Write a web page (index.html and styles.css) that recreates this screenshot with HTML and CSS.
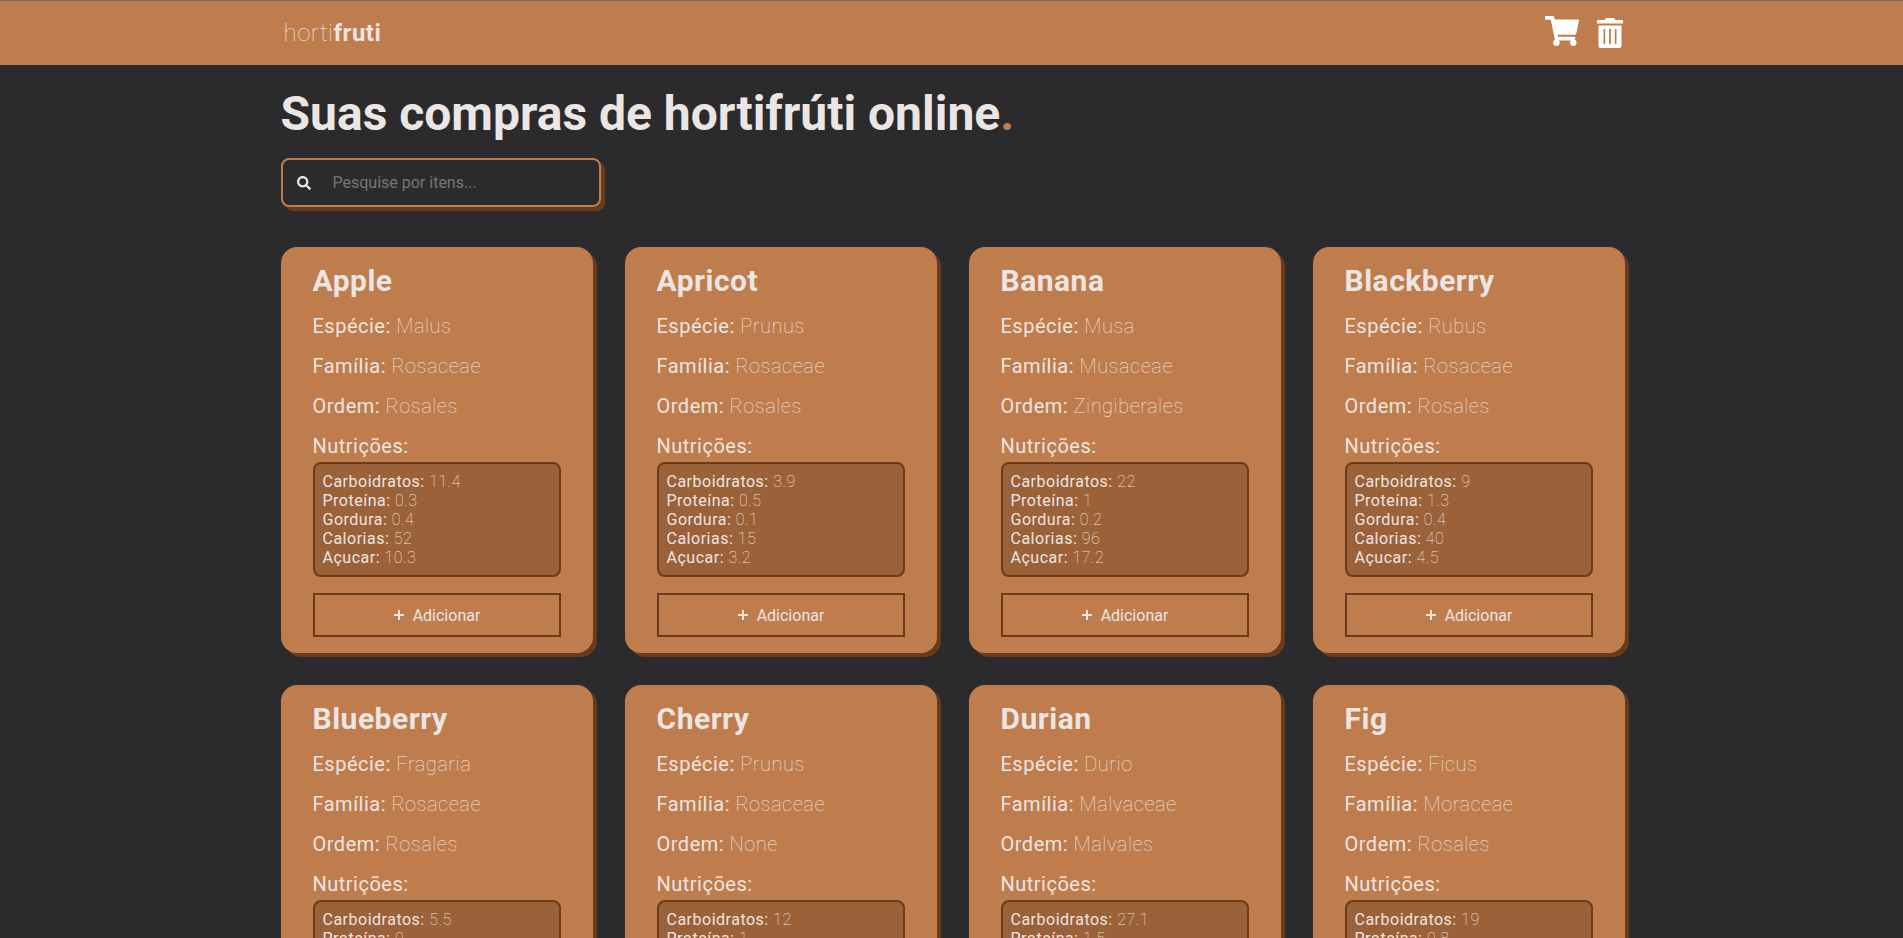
FILE: index.html
```html
<!DOCTYPE html>
<html lang="pt-BR">
<head>
<meta charset="utf-8">
<title>hortifruti</title>
<link rel="stylesheet" href="styles.css">
</head>
<body>
<header class="topbar">
  <div class="container topbar-inner">
    <a class="logo" href="#">horti<strong>fruti</strong></a>
    <nav class="actions">
      <button class="icon-btn" type="button" aria-label="Carrinho">
        <svg class="cart" viewBox="0 0 34 30" fill="#fff"><path d="M1 0H8Q9 0 9.200 1L9.700 3.500H33Q34.200 3.500 34 4.800L31.300 17.500Q31 18.700 30 18.700H12.600L13 20.800H29.500Q30.500 20.800 30.300 22L29.700 24.600H10L5.800 3.700H1Q0 3.700 0 2.700V1Q0 0 1 0Z"/><circle cx="11.400" cy="26.700" r="3.200"/><circle cx="28.300" cy="26.700" r="3.200"/></svg>
      </button>
      <button class="icon-btn" type="button" aria-label="Esvaziar">
        <svg class="trash" viewBox="0 0 26 30"><path fill="#fff" fill-rule="evenodd" d="M0 2.500Q0 2 .5 2H7.500L8.500 .6Q9 0 9.700 0H16.300Q17 0 17.500 .6L18.500 2H25.500Q26 2 26 2.500V5.500H0ZM1.500 7.500H24.500V27.500Q24.500 30 22 30H4Q1.500 30 1.500 27.500ZM6.500 11V26H8.200V11ZM12.100 11V26H13.900V11ZM17.800 11V26H19.500V11Z"/></svg>
      </button>
    </nav>
  </div>
</header>
<main class="container">
  <h1 class="title">Suas compras de hortifrúti online<span class="dot">.</span></h1>
  <label class="search">
    <svg class="search-icon" viewBox="0 0 512 512" aria-hidden="true"><path fill="currentColor" d="M505 442.700L405.300 343c-4.500-4.500-10.600-7-17-7H372c27.600-35.300 44-79.700 44-128C416 93.100 322.900 0 208 0S0 93.100 0 208s93.100 208 208 208c48.300 0 92.700-16.400 128-44v16.300c0 6.400 2.500 12.500 7 17l99.700 99.700c9.400 9.400 24.600 9.400 33.900 0l28.300-28.300c9.400-9.400 9.400-24.600.1-34zM208 336c-70.700 0-128-57.200-128-128 0-70.700 57.200-128 128-128 70.700 0 128 57.200 128 128 0 70.700-57.200 128-128 128z"/></svg>
    <input class="search-input" type="text" placeholder="Pesquise por itens..." aria-label="Pesquise por itens">
  </label>
  <section class="grid">
    <article class="card"><h2 class="name">Apple</h2><p class="row">Espécie: <span>Malus</span></p><p class="row">Família: <span>Rosaceae</span></p><p class="row">Ordem: <span>Rosales</span></p><p class="row">Nutrições:</p>
      <ul class="facts"><li>Carboidratos: <span>11.4</span></li><li>Proteína: <span>0.3</span></li><li>Gordura: <span>0.4</span></li><li>Calorias: <span>52</span></li><li>Açucar: <span>10.3</span></li></ul>
      <button class="add" type="button"><svg class="plus" viewBox="0 0 12 12"><path d="M6 1V11M1 6H11"/></svg>Adicionar</button></article>
    <article class="card"><h2 class="name">Apricot</h2><p class="row">Espécie: <span>Prunus</span></p><p class="row">Família: <span>Rosaceae</span></p><p class="row">Ordem: <span>Rosales</span></p><p class="row">Nutrições:</p>
      <ul class="facts"><li>Carboidratos: <span>3.9</span></li><li>Proteína: <span>0.5</span></li><li>Gordura: <span>0.1</span></li><li>Calorias: <span>15</span></li><li>Açucar: <span>3.2</span></li></ul>
      <button class="add" type="button"><svg class="plus" viewBox="0 0 12 12"><path d="M6 1V11M1 6H11"/></svg>Adicionar</button></article>
    <article class="card"><h2 class="name">Banana</h2><p class="row">Espécie: <span>Musa</span></p><p class="row">Família: <span>Musaceae</span></p><p class="row">Ordem: <span>Zingiberales</span></p><p class="row">Nutrições:</p>
      <ul class="facts"><li>Carboidratos: <span>22</span></li><li>Proteína: <span>1</span></li><li>Gordura: <span>0.2</span></li><li>Calorias: <span>96</span></li><li>Açucar: <span>17.2</span></li></ul>
      <button class="add" type="button"><svg class="plus" viewBox="0 0 12 12"><path d="M6 1V11M1 6H11"/></svg>Adicionar</button></article>
    <article class="card"><h2 class="name">Blackberry</h2><p class="row">Espécie: <span>Rubus</span></p><p class="row">Família: <span>Rosaceae</span></p><p class="row">Ordem: <span>Rosales</span></p><p class="row">Nutrições:</p>
      <ul class="facts"><li>Carboidratos: <span>9</span></li><li>Proteína: <span>1.3</span></li><li>Gordura: <span>0.4</span></li><li>Calorias: <span>40</span></li><li>Açucar: <span>4.5</span></li></ul>
      <button class="add" type="button"><svg class="plus" viewBox="0 0 12 12"><path d="M6 1V11M1 6H11"/></svg>Adicionar</button></article>
    <article class="card"><h2 class="name">Blueberry</h2><p class="row">Espécie: <span>Fragaria</span></p><p class="row">Família: <span>Rosaceae</span></p><p class="row">Ordem: <span>Rosales</span></p><p class="row">Nutrições:</p>
      <ul class="facts"><li>Carboidratos: <span>5.5</span></li><li>Proteína: <span>0</span></li><li>Gordura: <span>0.4</span></li><li>Calorias: <span>29</span></li><li>Açucar: <span>5.4</span></li></ul>
      <button class="add" type="button"><svg class="plus" viewBox="0 0 12 12"><path d="M6 1V11M1 6H11"/></svg>Adicionar</button></article>
    <article class="card"><h2 class="name">Cherry</h2><p class="row">Espécie: <span>Prunus</span></p><p class="row">Família: <span>Rosaceae</span></p><p class="row">Ordem: <span>None</span></p><p class="row">Nutrições:</p>
      <ul class="facts"><li>Carboidratos: <span>12</span></li><li>Proteína: <span>1</span></li><li>Gordura: <span>0.3</span></li><li>Calorias: <span>50</span></li><li>Açucar: <span>8</span></li></ul>
      <button class="add" type="button"><svg class="plus" viewBox="0 0 12 12"><path d="M6 1V11M1 6H11"/></svg>Adicionar</button></article>
    <article class="card"><h2 class="name">Durian</h2><p class="row">Espécie: <span>Durio</span></p><p class="row">Família: <span>Malvaceae</span></p><p class="row">Ordem: <span>Malvales</span></p><p class="row">Nutrições:</p>
      <ul class="facts"><li>Carboidratos: <span>27.1</span></li><li>Proteína: <span>1.5</span></li><li>Gordura: <span>5.3</span></li><li>Calorias: <span>147</span></li><li>Açucar: <span>6.75</span></li></ul>
      <button class="add" type="button"><svg class="plus" viewBox="0 0 12 12"><path d="M6 1V11M1 6H11"/></svg>Adicionar</button></article>
    <article class="card"><h2 class="name">Fig</h2><p class="row">Espécie: <span>Ficus</span></p><p class="row">Família: <span>Moraceae</span></p><p class="row">Ordem: <span>Rosales</span></p><p class="row">Nutrições:</p>
      <ul class="facts"><li>Carboidratos: <span>19</span></li><li>Proteína: <span>0.8</span></li><li>Gordura: <span>0.3</span></li><li>Calorias: <span>74</span></li><li>Açucar: <span>16</span></li></ul>
      <button class="add" type="button"><svg class="plus" viewBox="0 0 12 12"><path d="M6 1V11M1 6H11"/></svg>Adicionar</button></article>
  </section>
</main>
</body>
</html>
```
FILE: styles.css
```css
:root {
  --bg: #2b2b2d;
  --brand: #bf7c4c;
  --brand-mid: #9b6139;
  --brand-dark: #693a1b;
  --text: #ebe5e3;
}
* { box-sizing: border-box; margin: 0; padding: 0; }
body {
  background: var(--bg);
  color: var(--text);
  font-family: Roboto, "Liberation Sans", sans-serif;
  font-size: 16px;
}
button, input { font: inherit; color: inherit; }
.container { max-width: 1346px; margin: 0 auto; padding-left: 2px; }
.topbar { background: var(--brand); border-top: 1px solid #716d7b; }
.topbar-inner {
  display: flex;
  align-items: center;
  justify-content: space-between;
  height: 64px;
}
.logo {
  padding-left: 3px;
  color: var(--text);
  font-size: 24px;
  font-weight: 100;
  text-decoration: none;
  letter-spacing: 0.5px;
}
.logo strong { font-weight: 700; }
.actions { display: flex; gap: 18px; padding-right: 2px; }
.icon-btn { display: flex; align-items: center; background: none; border: 0; cursor: pointer; }
.cart { width: 34px; height: 30px; margin-bottom: 4px; }
.trash { width: 26px; height: 30px; }
.title { padding-top: 20px; font-size: 48px; font-weight: 700; line-height: 57px; }
.dot { color: var(--brand); }
.search {
  display: flex;
  align-items: center;
  width: 320px;
  height: 49px;
  margin: 16px 0 40px;
  padding: 0 14px;
  border: 2px solid var(--brand);
  border-radius: 8px;
  box-shadow: 4px 4px 0 var(--brand-dark);
}
.search-icon { flex: none; width: 14px; height: 14px; }
.search-input { flex: 1; min-width: 0; margin-left: 22px; background: none; border: 0; outline: 0; }
.search-input::placeholder { color: #757575; }
.grid {
  display: grid;
  grid-template-columns: repeat(auto-fill, minmax(300px, 1fr));
  gap: 32px;
  padding-bottom: 32px;
}
.card {
  padding: 16px 32px;
  background: var(--brand);
  border-radius: 16px;
  box-shadow: 4px 4px 0 var(--brand-dark);
  letter-spacing: 0.5px;
}
.name { font-size: 30px; font-weight: 700; line-height: 35px; }
.row { margin-top: 16px; font-size: 20px; line-height: 24px; }
.row span, .facts span { font-weight: 100; }
.facts {
  margin: 4px 0 16px;
  padding: 8px;
  list-style: none;
  line-height: 19px;
  background: var(--brand-mid);
  border: 2px solid var(--brand-dark);
  border-radius: 8px;
}
.add {
  display: flex;
  align-items: center;
  justify-content: center;
  gap: 8px;
  width: 100%;
  height: 44px;
  background: none;
  border: 2px solid var(--brand-dark);
  cursor: pointer;
}
.plus { width: 12px; height: 12px; fill: none; stroke: currentColor; stroke-width: 2; }
```
